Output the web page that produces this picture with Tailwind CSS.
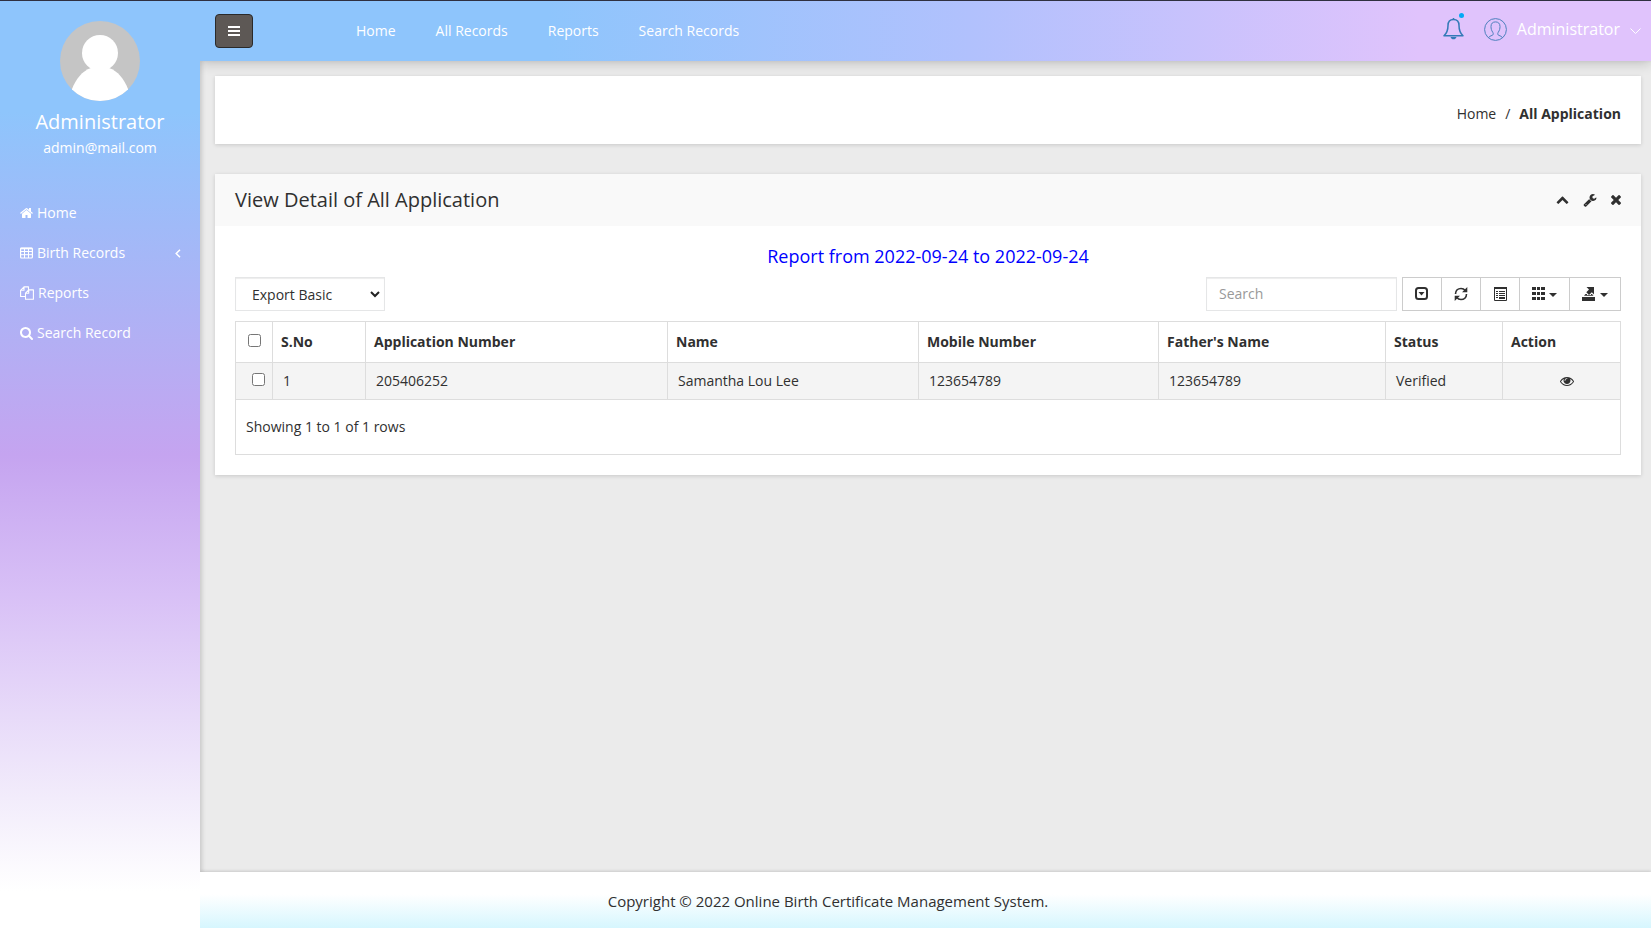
<!DOCTYPE html>
<html lang="en">
<head>
    <meta charset="UTF-8">
    <meta name="viewport" content="width=device-width, initial-scale=1.0">
    <title>Online Birth Certificate Management System</title>
    <script src="https://cdn.jsdelivr.net/npm/@tailwindcss/browser@4"></script>
</head>
<body class="flex min-h-screen border-t border-[#2f3040] bg-[#ebebeb] font-['Open_Sans','Noto_Sans',sans-serif] text-sm text-[#303030]">

    <!-- Sidebar -->
    <aside class="relative z-30 w-[200px] shrink-0 bg-linear-[180deg,#8ec5fc_0%,#8ec5fc_12%,#c5a4f0_49%,#d8c0f6_64%,#f2ecfb_86%,#ffffff_96%] text-white">
        <div class="flex flex-col items-center pt-5">
            <svg class="size-20 rounded-full" viewBox="0 0 80 80" aria-hidden="true">
                <rect width="80" height="80" fill="#c5c5c5"/>
                <circle cx="40" cy="32" r="18" fill="#fff"/>
                <path d="M31 47h18c9 3 15 11 19 21v12H12V68c4-10 10-18 19-21z" fill="#fff"/>
            </svg>
            <h3 class="mt-[9px] text-xl leading-6">Administrator</h3>
            <p class="mt-1 leading-5">admin@mail.com</p>
        </div>
        <nav class="mt-[35px]">
            <a href="#" class="flex h-10 items-center gap-1 pr-4 pl-5">
                <svg class="size-[13px]" viewBox="64 128 1664 1664" fill="currentColor"><path d="M1472 992v480q0 26-19 45t-45 19h-384v-384h-256v384h-384q-26 0-45-19t-19-45v-480q0-1 .5-3t.5-3l575-474 575 474q1 2 1 6zm223-69l-62 74q-8 9-21 11h-3q-13 0-21-7l-692-577-692 577q-12 8-24 7-13-2-21-11l-62-74q-8-10-7-23.500t11-21.500l719-599q32-26 76-26t76 26l244 204v-195q0-14 9-23t23-9h192q14 0 23 9t9 23v408l219 182q10 8 11 21.500t-7 23.500z"/></svg>
                Home
            </a>
            <a href="#" class="flex h-10 items-center gap-1 pr-4 pl-5">
                <svg class="h-3 w-[13px]" viewBox="0 0 13 12" fill="none" stroke="currentColor"><rect x=".6" y="1" width="11.800" height="10" rx="1" stroke-width="1.200"/><path d="M.6 1.500h11.800" stroke-width="1.600"/><path d="M.6 4.500h11.800M.6 7.700h11.800M4.500 1v10M8.500 1v10"/></svg>
                Birth Records
                <svg class="mr-[3px] ml-auto h-[9px] w-[6px]" viewBox="0 0 6 9" fill="none" stroke="currentColor" stroke-width="1.500"><path d="M5 .7L1.200 4.500 5 8.300"/></svg>
            </a>
            <a href="#" class="flex h-10 items-center gap-1 pr-4 pl-5">
                <svg class="h-[14px] w-[14px]" viewBox="0 0 14 14" fill="none" stroke="currentColor" stroke-width="1.100" stroke-linejoin="round"><path d="M5.500 10.500H.6V4.300L4 .9h4.500v3M4 .9v3.400H.6"/><path d="M8.700 3.900h4.700v9.300H5.500V7.200l3.200-3.300v3.300H5.500"/></svg>
                Reports
            </a>
            <a href="#" class="flex h-10 items-center gap-1 pr-4 pl-5">
                <svg class="size-[13px]" viewBox="64 128 1664 1664" fill="currentColor"><path d="M1216 832q0-185-131.500-316.500t-316.500-131.500-316.500 131.500-131.500 316.500 131.500 316.500 316.500 131.500 316.500-131.500 131.500-316.500zm512 832q0 52-38 90t-90 38q-54 0-90-38l-343-342q-179 124-399 124-143 0-273.500-55.500t-225-150-150-225-55.500-273.500 55.500-273.500 150-225 225-150 273.500-55.500 273.500 55.500 225 150 150 225 55.500 273.500q0 220-124 399l343 343q37 37 37 90z"/></svg>
                Search Record
            </a>
        </nav>
    </aside>

    <div class="flex min-w-0 flex-1 flex-col">

        <!-- Top bar -->
        <header class="relative z-20 flex h-[60px] items-center bg-linear-[90deg,#8ec5fc_0%,#8ec5fc_24%,#b1c1fd_53%,#e0c3fc_84%] pr-[10px] pl-[15px] text-white shadow-[0_2px_12px_rgba(0,0,0,0.2)]">
            <button type="button" aria-label="Toggle menu" class="flex h-[34px] w-[38px] items-center justify-center rounded border border-[#2a2a2a] bg-[#5d5855]">
                <svg class="h-[10px] w-3" viewBox="0 0 12 10" fill="#fff"><path d="M0 0h12v2H0zM0 4h12v2H0zM0 8h12v2H0z"/></svg>
            </button>
            <nav class="ml-[103px] flex gap-10">
                <a href="#">Home</a>
                <a href="#">All Records</a>
                <a href="#">Reports</a>
                <a href="#">Search Records</a>
            </nav>
            <div class="ml-auto flex items-center pb-1">
                <a href="#" aria-label="Notifications" class="relative mr-5">
                    <svg class="h-[22px] w-[21px]" viewBox="0 0 21 22" fill="none" stroke="#337ab7" stroke-width="1.500" stroke-linejoin="round"><path d="M10.500 1.500C7 1.500 5 4 5 7.500c0 5-1.500 8-4 10.300h19c-2.500-2.300-4-5.300-4-10.300 0-3.500-2-6-5.500-6z"/><path d="M10.500 0v2"/><path d="M7.500 19h6c-.5 1.600-1.600 2.300-3 2.300s-2.500-.7-3-2.300z" fill="#337ab7" stroke="none"/></svg>
                    <span class="absolute -top-[5px] right-0 size-[5px] rounded-full bg-[#03a9f4]"></span>
                </a>
                <button type="button" class="flex items-center text-base">
                    <svg class="mr-[10px] size-[23px]" viewBox="0 0 23 23" fill="none" stroke="#4d80bd"><circle cx="11.500" cy="11.500" r="10.900"/><path d="M4.500 19.700c.8-1.300 2-1.700 3.600-2.300 1.300-.5 1.500-1.700.7-3C7.400 12.300 7 10.600 7 8.500 7 5.500 8.700 3.900 11.500 3.900S16 5.500 16 8.500c0 2.100-.4 3.800-1.800 5.900-.8 1.300-.6 2.500.7 3 1.600.6 2.800 1 3.600 2.300"/></svg>
                    Administrator
                    <svg class="mt-1 ml-[10px] h-[6px] w-[11px]" viewBox="0 0 11 6" fill="none" stroke="#fff"><path d="M.5.500l5 5 5-5"/></svg>
                </button>
            </div>
        </header>

        <main class="flex-1 pt-[15px] pr-[10px] pb-5 pl-[15px] shadow-[inset_4px_0_4px_-2px_rgba(0,0,0,0.15)]">

            <!-- Breadcrumb -->
            <nav aria-label="Breadcrumb" class="flex h-[68px] items-center justify-end gap-[9px] bg-white px-5 pt-2 shadow-[0_1px_4px_rgba(0,0,0,0.15)]">
                <a href="#">Home</a>
                <span>/</span>
                <span class="font-bold">All Application</span>
            </nav>

            <!-- Application list -->
            <section class="mt-[30px] bg-white shadow-[0_1px_4px_rgba(0,0,0,0.15)]">
                <div class="flex h-[52px] items-center justify-between bg-[#f9f9f9] px-5">
                    <h1 class="text-xl">View Detail of All Application</h1>
                    <div class="flex items-center gap-[14px] pb-px">
                        <button type="button" aria-label="Collapse"><svg class="size-[13px]" viewBox="0 0 1792 1792" fill="currentColor"><path d="M1683 1331l-166 165q-19 19-45 19t-45-19l-531-531-531 531q-19 19-45 19t-45-19l-166-165q-19-19-19-45.500t19-45.500l742-741q19-19 45-19t45 19l742 741q19 19 19 45.500t-19 45.500z"/></svg></button>
                        <button type="button" aria-label="Settings"><svg class="size-[14px]" viewBox="0 0 1792 1792" fill="currentColor"><path d="M448 1472q0-26-19-45t-45-19-45 19-19 45 19 45 45 19 45-19 19-45zm644-420l-682 682q-37 37-90 37-52 0-91-37l-106-108q-38-36-38-90 0-53 38-91l681-681q39 98 114.500 173.500t173.500 114.500zm634-435q0 39-23 106-47 134-164.500 217.500t-258.500 83.500q-185 0-316.500-131.500t-131.500-316.500 131.500-316.500 316.500-131.500q58 0 121.500 16.500t107.500 46.500q16 11 16 28t-16 28l-293 169v224l193 107q5-3 79-48.500t135.500-81 70.500-35.500q15 0 23.500 10t8.500 25z"/></svg></button>
                        <button type="button" aria-label="Close"><svg class="size-[10px]" viewBox="300 360 1190 1190" fill="currentColor"><path d="M1490 1322q0 40-28 68l-136 136q-28 28-68 28t-68-28l-294-294-294 294q-28 28-68 28t-68-28l-136-136q-28-28-28-68t28-68l294-294-294-294q-28-28-28-68t28-68l136-136q28-28 68-28t68 28l294 294 294-294q28-28 68-28t68 28l136 136q28 28 28 68t-28 68l-294 294 294 294q28 28 28 68z"/></svg></button>
                    </div>
                </div>

                <div class="p-5">
                    <h2 class="text-center text-lg leading-[21px] text-[blue]">Report from 2022-09-24 to 2022-09-24</h2>

                    <div class="mt-[10px] flex items-center">
                        <div class="relative">
                            <select aria-label="Export type" class="h-[34px] w-[150px] appearance-none border border-[#e5e6e7] bg-white px-4 pt-px shadow-[inset_0_1px_1px_rgba(0,0,0,0.075)]">
                                <option>Export Basic</option>
                                <option>Export All</option>
                                <option>Export Selected</option>
                            </select>
                            <svg class="pointer-events-none absolute top-[14px] right-[5px] h-[7px] w-[10px]" viewBox="0 0 10 7" fill="none" stroke="#222" stroke-width="2"><path d="M1 1l4 4 4-4"/></svg>
                        </div>

                        <input type="search" placeholder="Search" aria-label="Search" class="ml-auto h-[34px] w-[191px] border border-[#e5e6e7] px-3 pb-px shadow-[inset_0_1px_1px_rgba(0,0,0,0.075)] placeholder:text-[#999]">

                        <div class="ml-[5px] flex h-[34px] divide-x divide-[#ccc] border border-[#ccc] text-[#303030]">
                            <button type="button" aria-label="Toggle pagination" class="flex w-[39px] items-center justify-center pr-px pb-px"><svg class="size-[13px]" viewBox="0 0 13 13"><rect x="1" y="1" width="11" height="11" rx="2.500" fill="none" stroke="currentColor" stroke-width="2"/><path d="M3.500 5h6l-3 3.500z" fill="currentColor"/></svg></button>
                            <button type="button" aria-label="Refresh" class="flex w-[39px] items-center justify-center pb-px"><svg class="size-[14px]" viewBox="0 0 14 14"><path d="M1.500 7C1.500 3.500 4 1.500 7 1.500c1.800 0 3.200.7 4.300 2M12.500 7c0 3.500-2.500 5.500-5.500 5.500-1.800 0-3.200-.7-4.300-2" fill="none" stroke="currentColor" stroke-width="1.600"/><path d="M13.300 0v5.300H8zM.7 14V8.700H6z" fill="currentColor"/></svg></button>
                            <button type="button" aria-label="Toggle view" class="flex w-[39px] items-center justify-center pb-px"><svg class="h-[14px] w-[13px]" viewBox="0 0 13 14"><path d="M.5.500v13h12V.5" fill="none" stroke="currentColor"/><path d="M0 0h13v2H0zM2 4h2v1H2zM5 4h6v1H5zM2 6h2v1H2zM5 6h6v1H5zM2 8h2v1H2zM5 8h6v1H5zM2 10h2v1H2zM5 10h6v2H5z" fill="currentColor"/></svg></button>
                            <button type="button" aria-label="Columns" class="flex w-[50px] items-center justify-center gap-1 pb-px"><svg class="size-[13px]" viewBox="0 0 13 13" fill="currentColor"><path d="M0 0h4v3H0zM5 0h3v3H5zM9 0h4v3H9zM0 5h4v3H0zM5 5h3v3H5zM9 5h4v3H9zM0 10h4v3H0zM5 10h3v3H5zM9 10h4v3H9z"/></svg><svg class="mt-[3px] h-1 w-2" viewBox="0 0 8 4" fill="currentColor"><path d="M0 0h8L4 4z"/></svg></button>
                            <button type="button" aria-label="Export" class="flex w-[50px] items-center justify-center gap-[5px] pb-px"><svg class="h-[14px] w-[13px]" viewBox="0 0 13 14" fill="currentColor"><path d="M0 10h13v4H0zM2 8.800L3.500 7H5v1h4V7h1l1.500 1.800zM4.500 0H12v7.500L9.800 5.300 7 8 4.300 5.300 7 2.500z"/></svg><svg class="mt-[3px] h-1 w-2" viewBox="0 0 8 4" fill="currentColor"><path d="M0 0h8L4 4z"/></svg></button>
                        </div>
                    </div>

                    <!-- The frame is on the wrapper, the cells only draw the lines between them -->
                    <div class="mt-[10px] border border-[#ddd]">
                        <table class="w-full table-fixed border-separate border-spacing-0 text-left">
                            <colgroup>
                                <col class="w-[37px]">
                                <col class="w-[93px]">
                                <col class="w-[302px]">
                                <col class="w-[251px]">
                                <col class="w-[240px]">
                                <col class="w-[227px]">
                                <col class="w-[117px]">
                                <col class="w-[117px]">
                            </colgroup>
                            <thead>
                                <tr class="h-[41px]">
                                    <th class="border-r border-b border-[#ddd] pb-[3px]"><input type="checkbox" aria-label="Select all" class="mx-auto block size-[13px]"></th>
                                    <th class="border-r border-b border-[#ddd] px-2">S.No</th>
                                    <th class="border-r border-b border-[#ddd] px-2">Application Number</th>
                                    <th class="border-r border-b border-[#ddd] px-2">Name</th>
                                    <th class="border-r border-b border-[#ddd] px-2">Mobile Number</th>
                                    <th class="border-r border-b border-[#ddd] px-2">Father's Name</th>
                                    <th class="border-r border-b border-[#ddd] px-2">Status</th>
                                    <th class="border-b border-[#ddd] px-2">Action</th>
                                </tr>
                            </thead>
                            <tbody>
                                <tr class="h-[37px] bg-[#f4f4f4]">
                                    <td class="border-r border-b border-[#ddd] pb-[3px] pl-4"><input type="checkbox" aria-label="Select row 1" class="block size-[13px]"></td>
                                    <td class="border-r border-b border-[#ddd] px-[10px]">1</td>
                                    <td class="border-r border-b border-[#ddd] px-[10px]">205406252</td>
                                    <td class="border-r border-b border-[#ddd] px-[10px]">Samantha Lou Lee</td>
                                    <td class="border-r border-b border-[#ddd] px-[10px]">123654789</td>
                                    <td class="border-r border-b border-[#ddd] px-[10px]">123654789</td>
                                    <td class="border-r border-b border-[#ddd] px-[10px]">Verified</td>
                                    <td class="border-b border-[#ddd] pl-[10px]">
                                        <a href="#" aria-label="View" class="flex justify-center"><svg class="size-[14px]" viewBox="0 0 1792 1792" fill="currentColor"><path d="M1664 960q-152-236-381-353 61 104 61 225 0 185-131.500 316.500t-316.500 131.500-316.500-131.500-131.500-316.500q0-121 61-225-229 117-381 353 133 205 333.500 326.500t434.500 121.500 434.500-121.500 333.500-326.500zm-720-384q0-20-14-34t-34-14q-125 0-214.500 89.500t-89.500 214.500q0 20 14 34t34 14 34-14 14-34q0-86 61-147t147-61q20 0 34-14t14-34zm848 384q0 34-20 69-140 230-376.500 368.500t-499.500 138.500-499.500-139-376.500-368q-20-35-20-69t20-69q140-229 376.500-368t499.500-139 499.500 139 376.500 368q20 35 20 69z"/></svg></a>
                                    </td>
                                </tr>
                            </tbody>
                        </table>
                        <p class="flex h-[54px] items-center px-[10px]">Showing 1 to 1 of 1 rows</p>
                    </div>
                </div>
            </section>
        </main>

        <footer class="flex h-14 items-center justify-center bg-linear-[180deg,#ffffff_40%,#d6f6fe_100%] pt-1 pr-[195px] text-[15px] shadow-[0_-1px_3px_rgba(0,0,0,0.12)]">
            Copyright © 2022 Online Birth Certificate Management System.
        </footer>
    </div>
</body>
</html>
